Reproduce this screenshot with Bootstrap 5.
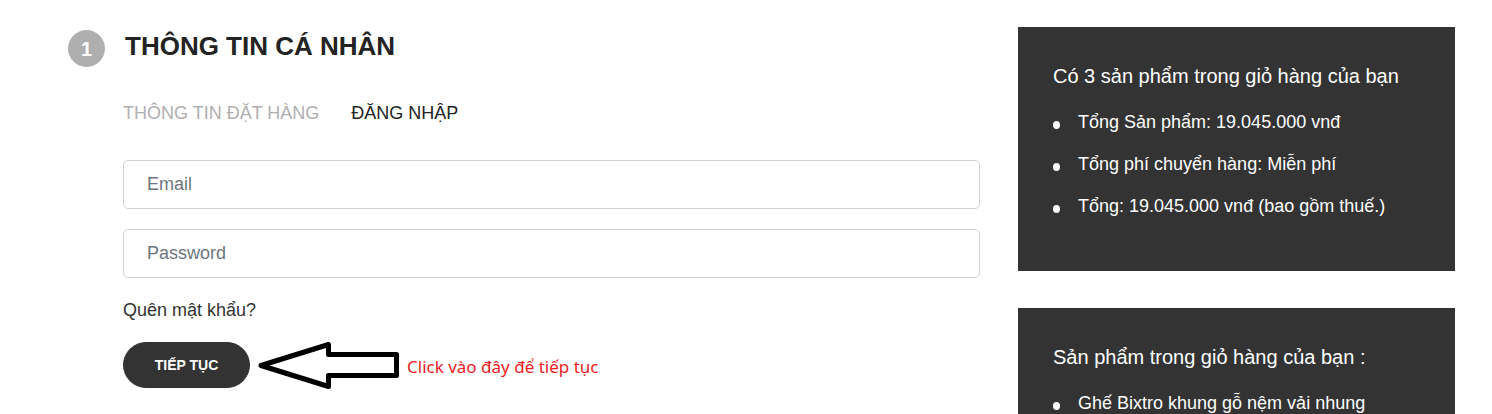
<!DOCTYPE html>
<html lang="vi">
<head>
<meta charset="utf-8">
<meta name="viewport" content="width=device-width, initial-scale=1">
<title>Thông tin cá nhân</title>
<link href="https://cdn.jsdelivr.net/npm/bootstrap@5.3.0/dist/css/bootstrap.min.css" rel="stylesheet">
<style>
  body { font-family: "Liberation Sans", Arial, sans-serif; font-size: 18px; line-height: 24px; color: #232323; background: #fff; }
  .checkout { padding: 27px 37px 0 68px; }
  .checkout > .row { --bs-gutter-x: 38px; }
  .step-number { width: 37px; height: 37px; margin-top: 3px; background: #afafaf; font-size: 20px; }
  .step-title { font-size: 26px; line-height: 38px; margin-left: 20px; }
  .step-body { padding-left: 55px; }
  .step-tabs { gap: 32px; margin-top: 34px; margin-bottom: 35px; }
  .step-tabs .nav-link { padding: 0; color: #232323; }
  .step-tabs .nav-link.other-tab { color: #afafaf; }
  .field { height: 49px; padding: 0 23px; margin-bottom: 20px; font-size: 18px; border-color: #ced4da; border-radius: 5px; }
  .field::placeholder { color: #6c757d; }
  .forgot { color: #333; margin-bottom: 19px; }
  .btn-next { --bs-btn-color: #fff; --bs-btn-bg: #333; --bs-btn-border-color: #333; --bs-btn-hover-color: #fff; --bs-btn-hover-bg: #232323; width: 127px; height: 46px; font-size: 14px; }
  .hint { font-family: "Noto Sans", Tahoma, sans-serif; font-size: 17px; line-height: 24px; padding-top: 4px; color: #ed1c24; }
  .summary { background: #333; color: #fff; padding: 35px 35px 37px; margin-bottom: 37px; }
  .summary h2 { font-size: 20px; line-height: 28px; margin-bottom: 20px; }
  .summary ul { gap: 18px; }
  .summary li { gap: 18px; }
  .summary li::before { content: ""; flex: none; width: 7px; height: 8px; margin-top: 11px; border-radius: 50%; background: #fff; }
</style>
</head>
<body>
<main class="checkout container-fluid">
  <div class="row">
    <section class="col-8">
      <div class="d-flex align-items-start">
        <span class="step-number rounded-circle text-white fw-bold d-flex align-items-center justify-content-center">1</span>
        <h1 class="step-title fw-bold mb-0">THÔNG TIN CÁ NHÂN</h1>
      </div>
      <div class="step-body">
        <nav class="step-tabs nav">
          <a class="nav-link other-tab" href="#order">THÔNG TIN ĐẶT HÀNG</a>
          <a class="nav-link" href="#login" aria-current="page">ĐĂNG NHẬP</a>
        </nav>
        <form id="login">
          <input class="field form-control" type="email" placeholder="Email" aria-label="Email">
          <input class="field form-control" type="password" placeholder="Password" aria-label="Password">
          <a class="forgot d-inline-block text-decoration-none" href="#forgot">Quên mật khẩu?</a>
          <div class="d-flex align-items-center">
            <button class="btn-next btn rounded-pill fw-bold" type="submit">TIẾP TỤC</button>
            <svg class="ms-2 me-2" width="141" height="48" viewBox="0 0 141 48" fill="none" stroke="#000" stroke-width="5" stroke-linejoin="round" aria-hidden="true">
              <path d="M3 24.500 70.500 3.500V13.500H138.500V34.500H70.500V45.500Z"/>
            </svg>
            <span class="hint">Click vào đây để tiếp tục</span>
          </div>
        </form>
      </div>
    </section>
    <aside class="col-4">
      <div class="summary">
        <h2 class="fw-normal">Có 3 sản phẩm trong giỏ hàng của bạn</h2>
        <ul class="list-unstyled d-flex flex-column">
          <li class="d-flex align-items-start">Tổng Sản phẩm: 19.045.000 vnđ</li>
          <li class="d-flex align-items-start">Tổng phí chuyển hàng: Miễn phí</li>
          <li class="d-flex align-items-start">Tổng: 19.045.000 vnđ (bao gồm thuế.)</li>
        </ul>
      </div>
      <div class="summary">
        <h2 class="fw-normal">Sản phẩm trong giỏ hàng của bạn :</h2>
        <ul class="list-unstyled d-flex flex-column">
          <li class="d-flex align-items-start">Ghế Bixtro khung gỗ nệm vải nhung</li>
        </ul>
      </div>
    </aside>
  </div>
</main>
<script src="https://cdn.jsdelivr.net/npm/bootstrap@5.3.0/dist/js/bootstrap.bundle.min.js"></script>
</body>
</html>
